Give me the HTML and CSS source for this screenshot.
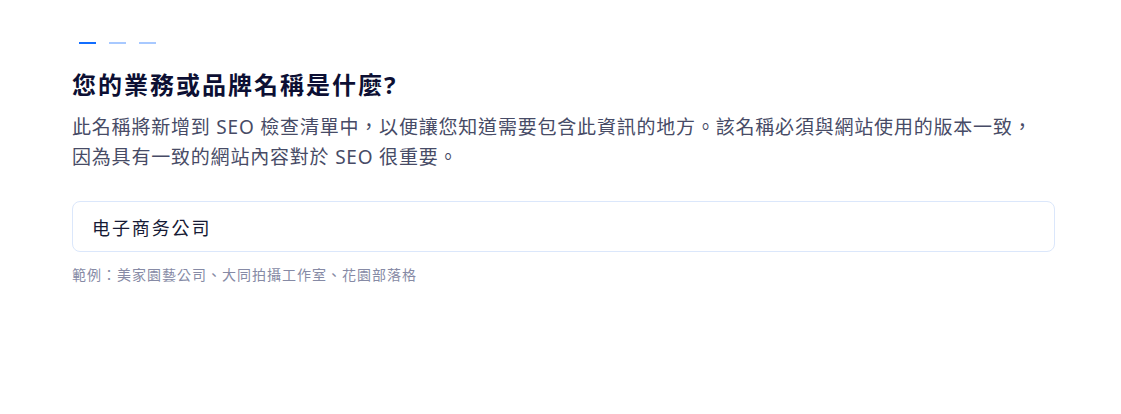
FILE: index.html
```html
<!DOCTYPE html>
<html lang="zh-Hant">
<head>
<meta charset="utf-8">
<title>SEO 設定</title>
<link rel="stylesheet" href="styles.css">
</head>
<body>
<main class="page">
  <div class="steps">
    <span class="step step-active"></span>
    <span class="step"></span>
    <span class="step"></span>
  </div>
  <h1 class="title">您的業務或品牌名稱是什麼?</h1>
  <p class="desc">此名稱將新增到 SEO 檢查清單中，以便讓您知道需要包含此資訊的地方。該名稱必須與網站使用的版本一致，因為具有一致的網站內容對於 SEO 很重要。</p>
  <div class="field">
    <input class="input" type="text" value="电子商务公司" aria-label="業務或品牌名稱">
  </div>
  <p class="hint">範例：美家園藝公司、大同拍攝工作室、花園部落格</p>
</main>
</body>
</html>
```
FILE: styles.css
```css
html, body {
  margin: 0;
  padding: 0;
  background: #ffffff;
}

body {
  font-family: "Noto Sans", "Noto Sans CJK TC", sans-serif;
}

.page {
  width: 983px;
  padding: 42px 0 0 72px;
  display: flex;
  flex-direction: column;
}

.steps {
  display: flex;
  gap: 13px;
  margin-left: 7px;
  height: 2px;
}

.step {
  display: block;
  width: 17px;
  height: 2px;
  background: #a8c9ff;
}

.step-active {
  background: #116dff;
}

.title {
  margin: 25px 0 0;
  font-size: 24px;
  line-height: 32px;
  font-weight: 700;
  letter-spacing: 2px;
  color: #0c0f33;
}

.desc {
  margin: 11px 0 0;
  width: 975px;
  font-size: 19px;
  line-height: 30px;
  letter-spacing: 0.8px;
  color: #474b66;
}

.field {
  margin-top: 29px;
}

.input {
  box-sizing: border-box;
  width: 983px;
  height: 51px;
  margin: 0;
  padding: 0 19px;
  border: 1px solid #dbe7fb;
  border-radius: 8px;
  background: #ffffff;
  font-family: "Noto Sans", "Noto Sans CJK SC", sans-serif;
  font-size: 18px;
  letter-spacing: 1.9px;
  color: #161a35;
  outline: none;
}

.hint {
  margin: 13px 0 0;
  font-size: 14px;
  line-height: 20px;
  letter-spacing: 1px;
  color: #868aa5;
}
```
